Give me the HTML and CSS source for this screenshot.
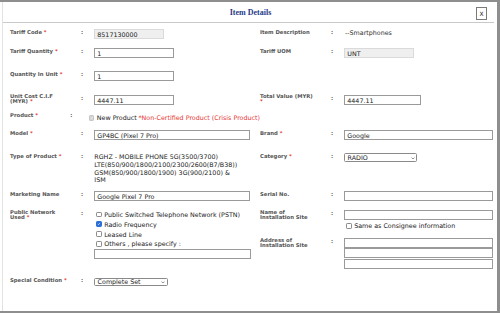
FILE: index.html
```html
<!DOCTYPE html>
<html>
<head>
<meta charset="utf-8">
<title>Item Details</title>
<link rel="stylesheet" href="styles.css">
</head>
<body>
<div class="frame">
<div class="dialog">
	<div class="head">
		<span class="title">Item Details</span>
		<span class="close">X</span>
	</div>
	<div class="form">
		<div class="row r-code">
			<div class="half">
				<div class="lbl">Tariff Code <b>*</b></div><div class="colon">:</div>
				<div class="val"><input class="inp ro w70" value="8517130000" readonly></div>
			</div>
			<div class="half">
				<div class="lbl">Item Description</div><div class="colon">:</div>
				<div class="val txt">--Smartphones</div>
			</div>
		</div>
		<div class="row r-qty">
			<div class="half">
				<div class="lbl">Tariff Quantity <b>*</b></div><div class="colon">:</div>
				<div class="val"><input class="inp w80" value="1"></div>
			</div>
			<div class="half">
				<div class="lbl">Tariff UOM</div><div class="colon">:</div>
				<div class="val"><input class="inp ro w70" value="UNT" readonly></div>
			</div>
		</div>
		<div class="row r-unit">
			<div class="half">
				<div class="lbl">Quantity In Unit <b>*</b></div><div class="colon">:</div>
				<div class="val"><input class="inp w80" value="1"></div>
			</div>
		</div>
		<div class="row r-cost">
			<div class="half">
				<div class="lbl up">Unit Cost C.I.F<br>(MYR) <b>*</b></div><div class="colon">:</div>
				<div class="val"><input class="inp w80" value="4447.11"></div>
			</div>
			<div class="half">
				<div class="lbl up">Total Value (MYR)<br><b>*</b></div><div class="colon">:</div>
				<div class="val"><input class="inp w76" value="4447.11"></div>
			</div>
		</div>
		<div class="row r-prod">
			<div class="half">
				<div class="lbl">Product <b>*</b></div><div class="colon">:</div>
				<div class="val">
					<div class="chk prod"><span class="box dis"><svg viewBox="0 0 10 10"><path d="M2 5.2l2.2 2.2L8 3" /></svg></span>New Product <em>*Non-Certified Product (Crisis Product)</em></div>
				</div>
			</div>
		</div>
		<div class="row r-model">
			<div class="half">
				<div class="lbl">Model <b>*</b></div><div class="colon">:</div>
				<div class="val"><input class="inp wl" value="GP4BC (Pixel 7 Pro)"></div>
			</div>
			<div class="half">
				<div class="lbl">Brand <b>*</b></div><div class="colon">:</div>
				<div class="val"><input class="inp wr" value="Google"></div>
			</div>
		</div>
		<div class="row r-type">
			<div class="half">
				<div class="lbl half-up">Type of Product <b>*</b></div><div class="colon half-up">:</div>
				<div class="val type">RGHZ - MOBILE PHONE 5G(3500/3700)<br>LTE(850/900/1800/2100/2300/2600(B7/B38))<br>GSM(850/900/1800/1900) 3G(900/2100) &amp;<br>ISM</div>
			</div>
			<div class="half">
				<div class="lbl half-up">Category <b>*</b></div><div class="colon half-up">:</div>
				<div class="val"><div class="sel cat"><span>RADIO</span><svg viewBox="0 0 8 5"><path d="M1 1l3 3 3-3" /></svg></div></div>
			</div>
		</div>
		<div class="row r-name">
			<div class="half">
				<div class="lbl">Marketing Name</div><div class="colon">:</div>
				<div class="val"><input class="inp wl" value="Google Pixel 7 Pro"></div>
			</div>
			<div class="half">
				<div class="lbl">Serial No.</div><div class="colon">:</div>
				<div class="val"><input class="inp wr" value=""></div>
			</div>
		</div>
		<div class="row r-net">
			<div class="half">
				<div class="lbl tight">Public Network<br>Used <b>*</b></div><div class="colon">:</div>
				<div class="val">
					<div class="chk line"><span class="box"></span>Public Switched Telephone Network (PSTN)</div>
					<div class="chk line"><span class="box on"><svg viewBox="0 0 10 10"><path d="M2 5.2l2.2 2.2L8 3" /></svg></span>Radio Frequency</div>
					<div class="chk line"><span class="box"></span>Leased Line</div>
					<div class="chk line"><span class="box"></span>Others , please specify :</div>
					<input class="inp wo" value="">
				</div>
			</div>
			<div class="half stack">
				<div class="sub site">
					<div class="lbl tight">Name of<br>Installation Site</div><div class="colon">:</div>
					<div class="val">
						<input class="inp wr" value="">
						<div class="chk line same"><span class="box"></span>Same as Consignee information</div>
					</div>
				</div>
				<div class="sub">
					<div class="lbl tight">Address of<br>Installation Site</div><div class="colon">:</div>
					<div class="val">
						<input class="inp wr" value="">
						<input class="inp wr" value="">
						<input class="inp wr sp" value="">
					</div>
				</div>
			</div>
		</div>
		<div class="row">
			<div class="half">
				<div class="lbl">Special Condition <b>*</b></div><div class="colon">:</div>
				<div class="val"><div class="sel cond"><span>Complete Set</span><svg viewBox="0 0 8 5"><path d="M1 1l3 3 3-3" /></svg></div></div>
			</div>
		</div>
	</div>
</div>
</div>
</body>
</html>
```

FILE: styles.css
```css
*{ margin:0; padding:0; box-sizing:border-box;}
body{ background:#fff; font-family:"DejaVu Sans", Verdana, sans-serif; color:#222;}

.frame{ height:313px; border-top:2px solid #8e8e8e; border-right:3px solid #8e8e8e; border-bottom:2px solid #8e8e8e; padding-left:2px;}
.dialog{ height:100%; border-left:1px solid #e2e2e2;}

.head{ height:21px; margin-right:3px; border-bottom:1px solid #c9c9c9; display:grid; grid-template-columns:1fr auto 1fr;}
.title{ grid-column:2; margin-top:6.3px; padding-left:4px; font:bold 8px/10px "Liberation Serif", serif; color:#1f3a87;}
.close{ grid-column:3; justify-self:end; margin:4.7px 6.7px 0 0; width:11.3px; height:13.3px; border:1px solid #7a7a7a; font:6px/11.3px "DejaVu Sans", sans-serif; color:#222; text-align:center;}

.form{ padding:6px 3px 0 7px;}
.row{ display:flex;}
.half{ display:flex; align-items:flex-start; width:250px;}
.half + .half{ flex:1;}
.lbl{ width:71px; padding:1px 13px 0 0; font:bold 5.3px/5.5px "DejaVu Sans", sans-serif; color:#555; white-space:nowrap;}
.lbl b{ color:#e53935;}
.lbl.up{ margin-top:-2.5px;}
.lbl.tight{ padding-top:0.3px; line-height:5px;}
.half-up{ padding-top:0.5px !important;}
.colon{ width:13.3px; padding-top:1px; font:bold 5.3px/5.5px "DejaVu Sans", sans-serif; color:#555;}
.val{ font-size:6.35px; line-height:7px;}
.txt{ padding:0.3px 0 0 0.7px; color:#333;}

.r-code{ height:19px;}
.r-qty{ height:23px;}
.r-unit{ height:24px;}
.r-cost{ height:17px;}
.r-prod{ height:18px;}
.r-model{ height:23px;}
.r-type{ height:38px;}
.r-name{ height:18.6px;}
.r-net{ height:67.4px;}

.inp{ display:block; height:10px; border:1px solid #9a9a9a; padding:0 2px; font:6.35px "DejaVu Sans", sans-serif; color:#222; background:#fff; outline:none;}
.inp.ro{ background:#efefef; border-color:#dadada;}
.w70{ width:70px;}
.w80{ width:80px;}
.w76{ width:76.4px;}
.wl{ width:156.2px;}
.wo{ width:156.8px; margin-top:0.5px;}
.wr{ width:149px;}
.inp.sp{ margin-top:1px;}

.type{ line-height:7.8px; white-space:nowrap;}

.chk{ display:flex; align-items:center; white-space:nowrap; color:#222;}
.chk em{ font-style:normal; color:#e53935; margin-left:1.7px;}
.chk.prod{ height:7px; margin-top:2.3px;}
.chk.line{ height:9.8px;}
.chk.same{ margin-top:1.5px;}
.box{ flex:none; width:5.6px; height:5.6px; margin:0 2.6px 0 1.7px; border:1px solid #8a8a8a; border-radius:1.2px; background:#fff; display:flex;}
.box svg{ width:100%; height:100%; fill:none; stroke:#fff; stroke-width:1.8;}
.box.on{ background:#2b6fd6; border-color:#2b6fd6;}
.box.dis{ margin-left:7.4px; background:#d4d4d4; border-color:#c6c6c6;}
.box.dis svg{ stroke:#f4f4f4;}

.sel{ display:flex; align-items:center; justify-content:space-between; height:9px; border:1px solid #8a8a8a; border-radius:1.5px; padding:0 1.4px 0 2.3px; background:#fff; color:#222;}
.sel svg{ width:4px; height:2.6px; fill:none; stroke:#555; stroke-width:1.3;}
.sel.cat{ width:73px; margin-top:0.3px;}
.sel.cond{ width:73.4px; margin-top:0.7px; height:8.5px;}

.stack{ flex-direction:column;}
.sub{ display:flex; align-items:flex-start;}
.sub.site{ height:28.4px;}
```
